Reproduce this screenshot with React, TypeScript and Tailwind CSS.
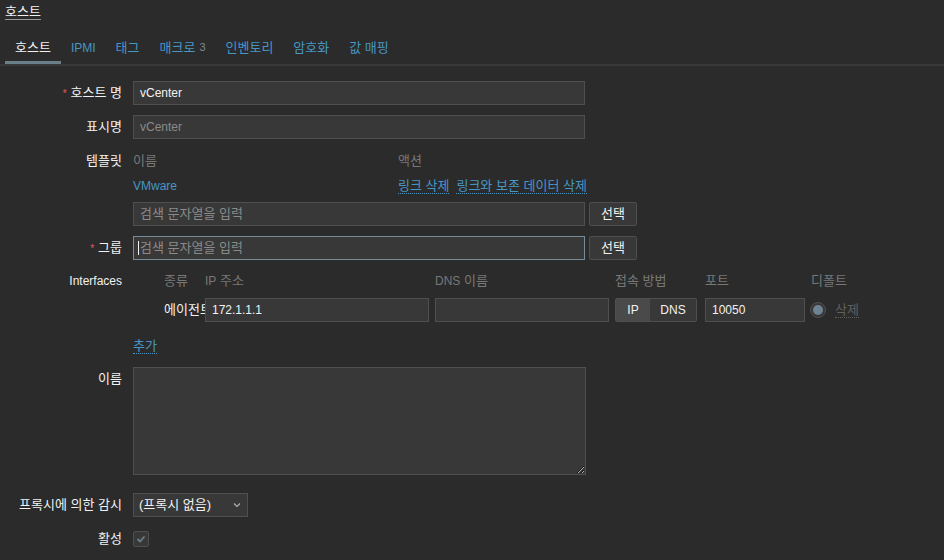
import React from 'react';

const font = { fontFamily: 'Arial, "Liberation Sans", "Noto Sans CJK KR", sans-serif' };

const tabs = ['호스트', 'IPMI', '태그', '매크로', '인벤토리', '암호화', '값 매핑'];

// Korean glyphs render a bit narrow at 12px, so Korean text sits at 13px and Latin text at 12px
const En = ({ children }: { children: React.ReactNode }) => <span className="text-[12px]">{children}</span>;

const Label = ({ children, req }: { children: React.ReactNode; req?: boolean }) => (
  <div className="flex items-center justify-end h-6 text-[13px] text-[#f2f2f2] whitespace-nowrap">
    {req && <span className="text-[#e45959] mr-[4px] text-[10px]">*</span>}
    {children}
  </div>
);

const Input = ({ value, muted, ko, w = 'w-[452px]' }: { value?: string; muted?: boolean; ko?: boolean; w?: string }) => (
  <div
    className={`${w} h-6 bg-[#383838] border border-[#4f4f4f] flex items-center px-[6px] ${ko ? 'text-[13px]' : 'text-[12px]'} ${
      muted ? 'text-[#8a8a8a]' : 'text-[#f2f2f2]'
    }`}
  >
    {value}
  </div>
);

const SelectBtn = () => (
  <button className="h-6 w-[48px] ml-[4px] bg-[#383838] border border-[#4f4f4f] rounded-[2px] text-[13px] text-[#f2f2f2]">
    선택
  </button>
);

const DottedLink = ({ children, muted }: { children: React.ReactNode; muted?: boolean }) => (
  <span
    className={`border-b border-dotted ${
      muted ? 'text-[#5f5f5f] border-[#5f5f5f]' : 'text-[#4796c4] border-[#4796c4]'
    } leading-[15px]`}
  >
    {children}
  </span>
);

export default function App() {
  return (
    <div className="w-[944px] h-[560px] bg-[#2b2b2b] text-[13px] overflow-hidden" style={font}>
      {/* Title */}
      <div className="pl-[5px] pt-[2px] h-[34px]">
        <span className="text-[13px] text-[#f2f2f2] underline underline-offset-[3px] decoration-[#9a9a9a]">호스트</span>
      </div>

      {/* Tabs */}
      <div className="flex pl-[5px] border-b-2 border-[#383838] h-[32px]">
        {tabs.map((t, i) => (
          <div
            key={t}
            className={`px-[10px] flex items-center h-[30px] -mb-[2px] border-b-[3px] ${
              i === 0 ? 'border-[#6b7f8a] text-[#f2f2f2]' : 'border-transparent text-[#4796c4]'
            }`}
          >
            {t === 'IPMI' ? <En>{t}</En> : t}
            {t === '매크로' && <span className="ml-[4px] text-[11px] text-[#7e8a91]">3</span>}
          </div>
        ))}
      </div>

      {/* Form */}
      <div className="grid grid-cols-[122px_1fr] gap-x-[11px] pt-[15px]">
        <Label req>호스트 명</Label>
        <Input value="vCenter" />

        <div className="h-[10px] col-span-2" />
        <Label>표시명</Label>
        <Input value="vCenter" muted />

        {/* Templates */}
        <div className="pt-[10px]">
          <Label>템플릿</Label>
        </div>
        <div className="pt-[10px] w-[504px]">
          <div className="flex h-6 items-center text-[#787878]">
            <div className="w-[265px]">이름</div>
            <div>액션</div>
          </div>
          <div className="flex h-6 items-center mt-[1px]">
            <div className="w-[265px] text-[#4796c4]">
              <En>VMware</En>
            </div>
            <div className="flex gap-[7px]">
              <DottedLink>링크 삭제</DottedLink>
              <DottedLink>링크와 보존 데이터 삭제</DottedLink>
            </div>
          </div>
          <div className="flex mt-[4px]">
            <Input value="검색 문자열을 입력" muted ko />
            <SelectBtn />
          </div>
        </div>

        <div className="h-[10px] col-span-2" />
        <Label req>그룹</Label>
        <div className="flex">
          <div className="w-[452px] h-6 bg-[#383838] border border-[#768d99] flex items-center pl-[4px] text-[13px] text-[#8a8a8a]">
            <span className="w-px h-[14px] bg-[#f2f2f2] mr-[1px]" />
            검색 문자열을 입력
          </div>
          <SelectBtn />
        </div>

        {/* Interfaces */}
        <div className="pt-[9px]">
          <Label>
            <En>Interfaces</En>
          </Label>
        </div>
        <div className="pt-[9px] pl-[31px]">
          <div className="flex h-6 items-center text-[#787878]">
            <div className="w-[41px]">종류</div>
            <div className="w-[230px]">
              <En>IP</En> 주소
            </div>
            <div className="w-[180px]">
              <En>DNS</En> 이름
            </div>
            <div className="w-[90px]">접속 방법</div>
            <div className="w-[106px]">포트</div>
            <div>디폴트</div>
          </div>
          <div className="flex items-center mt-[5px] h-6">
            <div className="w-[41px] overflow-hidden whitespace-nowrap text-[#f2f2f2]">에이전트</div>
            <Input value="172.1.1.1" w="w-[224px]" />
            <div className="w-[6px]" />
            <Input w="w-[174px]" />
            <div className="w-[6px]" />
            <div className="flex h-6 w-[82px] rounded-[2px] border border-[#4f4f4f] overflow-hidden text-[12px] text-[#f2f2f2]">
              <div className="w-[34px] bg-[#4a4a4a] flex items-center justify-center">IP</div>
              <div className="flex-1 bg-[#383838] flex items-center justify-center">DNS</div>
            </div>
            <div className="w-[8px]" />
            <Input value="10050" w="w-[100px]" />
            <div className="w-[5px]" />
            <div className="w-[16px] h-[16px] rounded-full border border-[#4f4f4f] bg-[#383838] flex items-center justify-center">
              <div className="w-[10px] h-[10px] rounded-full bg-[#6e8392]" />
            </div>
            <div className="ml-[9px]">
              <DottedLink muted>삭제</DottedLink>
            </div>
          </div>
        </div>

        <div />
        <div className="pt-[14px] h-[45px]">
          <DottedLink>추가</DottedLink>
        </div>

        {/* Name textarea */}
        <Label>이름</Label>
        <textarea
          readOnly
          className="w-[453px] h-[108px] bg-[#383838] border border-[#4f4f4f] outline-none text-[#f2f2f2] resize"
        />

        <div className="h-[18px] col-span-2" />
        <Label>프록시에 의한 감시</Label>
        <div className="w-[115px] h-6 bg-[#383838] border border-[#4f4f4f] flex items-center justify-between px-[5px] text-[#f2f2f2]">
          <span>(프록시 없음)</span>
          <svg width="10" height="10" viewBox="0 0 10 10" fill="none" stroke="#b0b0b0" strokeWidth="1.2">
            <path d="M2 3.5 L5 6.5 L8 3.5" />
          </svg>
        </div>

        <div className="h-[10px] col-span-2" />
        <Label>활성</Label>
        <div className="h-6 flex items-center">
          <div className="w-[16px] h-[16px] bg-[#383838] border border-[#4f4f4f] rounded-[2px] flex items-center justify-center">
            <svg width="10" height="10" viewBox="0 0 10 10" fill="none" stroke="#6b7f8a" strokeWidth="1.8">
              <path d="M1.5 5 L4 7.5 L8.5 2.5" />
            </svg>
          </div>
        </div>
      </div>
    </div>
  );
}
